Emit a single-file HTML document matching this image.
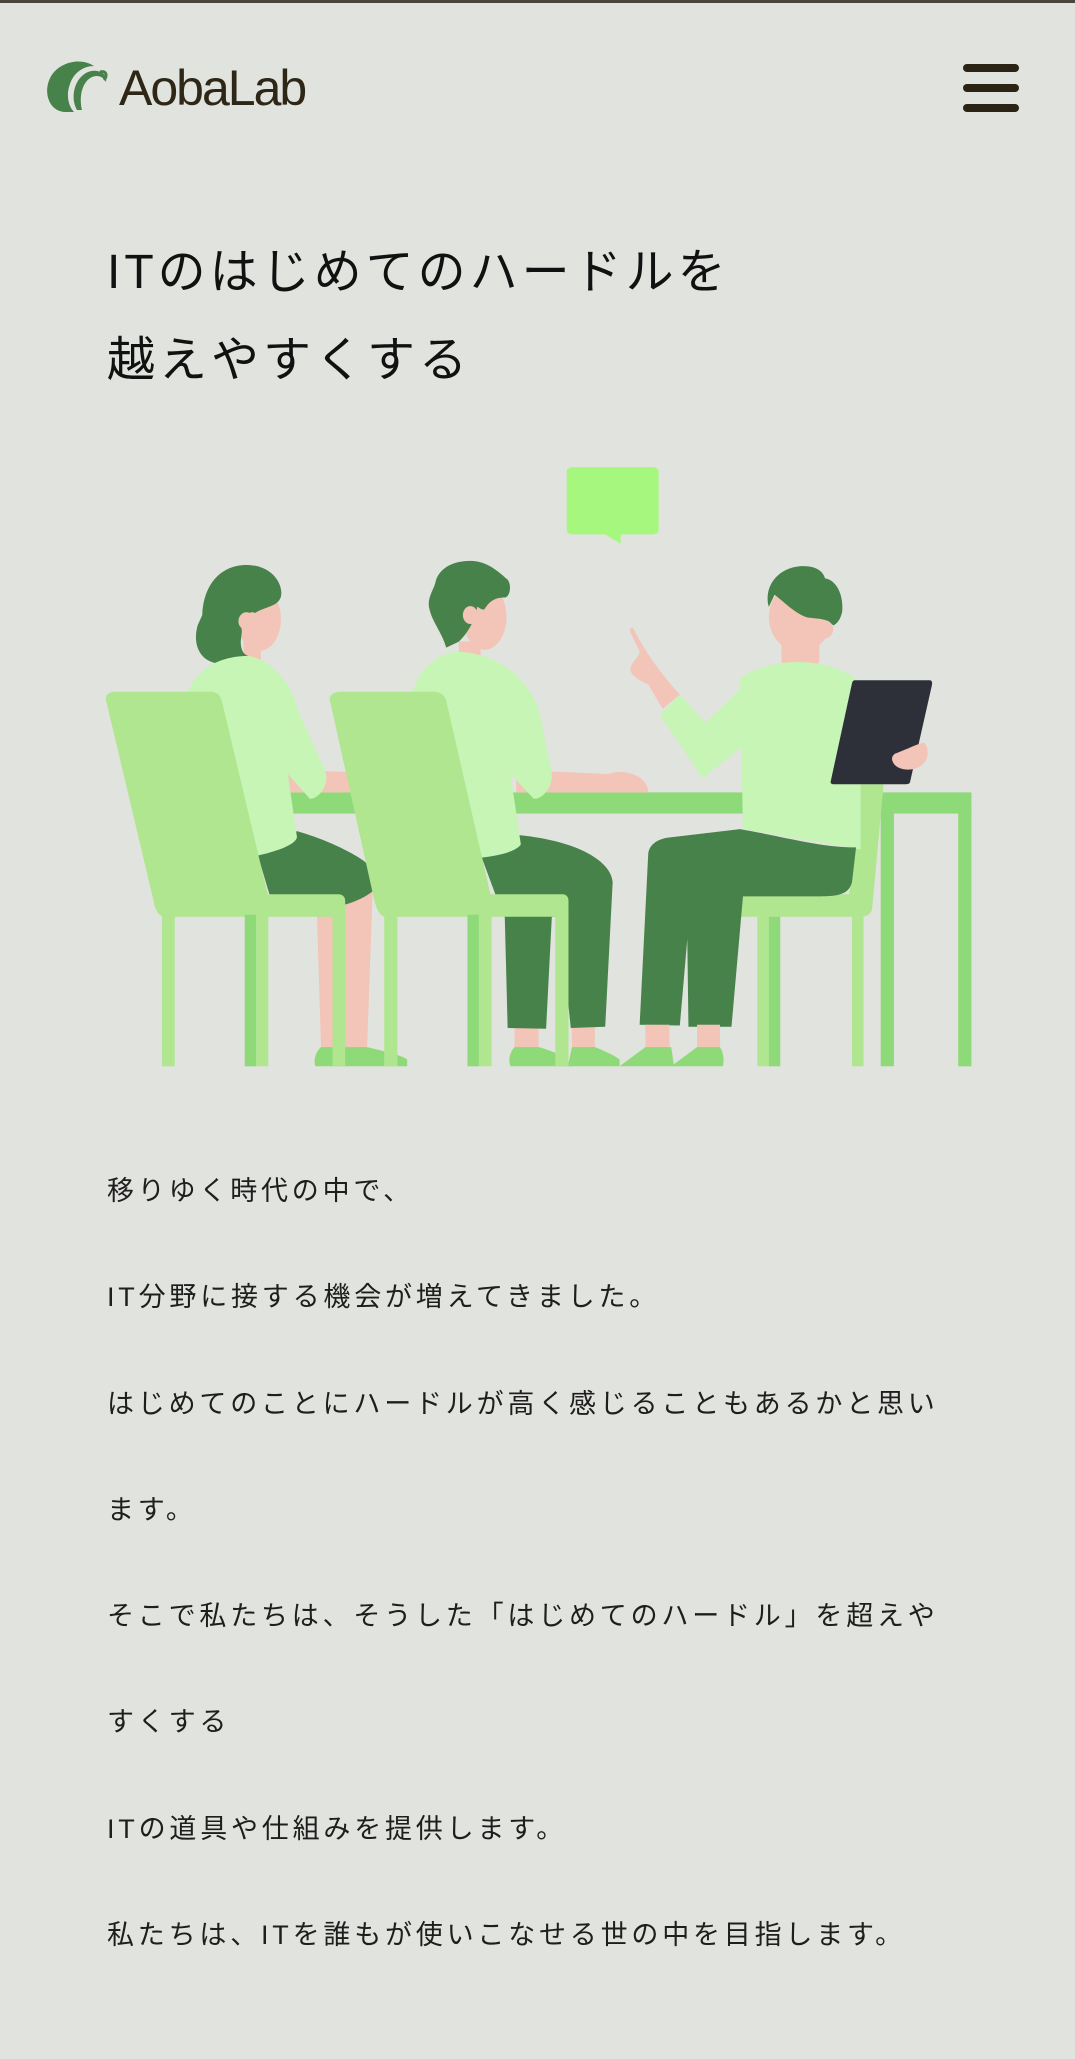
<!DOCTYPE html>
<html><head><meta charset="utf-8"><style>
html,body{margin:0;padding:0}
body{width:1075px;height:2059px;background:#e1e3de;position:relative;overflow:hidden;font-family:"Liberation Sans","Noto Sans CJK JP",sans-serif}
.topline{position:absolute;left:0;top:0;width:1075px;height:3px;background:#4a463e}
.logo{position:absolute;left:119px;top:58px;font-size:50px;letter-spacing:-2px;color:#2e2616;line-height:60px}
.burger span{position:absolute;left:963px;width:56px;height:8px;border-radius:4px;background:#2b2415}
h1{position:absolute;left:107px;top:229px;margin:0;font-weight:400;font-size:48px;letter-spacing:4px;line-height:88px;color:#111}
.body{position:absolute;left:107px;top:1138px;font-size:27px;letter-spacing:3.8px;line-height:106.3px;color:#1e1e1e;white-space:nowrap}
.body p{margin:0}
</style></head><body>
<div class="topline"></div>
<svg style="position:absolute;left:44px;top:60px" width="72" height="54" viewBox="0 0 72 54">
<path d="M20,52 C2,50 -2,26 10,12 C20,1 38,-2 50,6 C40,6 30,12 26,24 C22,34 24,46 30,52 Z" fill="#47824b"/>
<path d="M33,50 C26,38 30,18 44,12 C54,8 64,14 62,22 C58,14 48,14 42,22 C36,30 36,42 38,50 Z" fill="#47824b"/>
<path d="M56,12 C62,10 64,16 60,20" stroke="#47824b" stroke-width="3" fill="none"/>
</svg>
<div class="logo">AobaLab</div>
<div class="burger"><span style="top:64px"></span><span style="top:84px"></span><span style="top:104px"></span></div>
<h1>ITのはじめてのハードルを<br>越えやすくする</h1>

<svg style="position:absolute;left:0;top:0" width="1075" height="1100">
<g transform="translate(80,450) scale(0.574,0.4076)">
<rect x="848" y="42" width="160" height="165" rx="10" fill="#a6f77e"/>
<polygon points="912,205 942,230 942,205" fill="#a6f77e"/>
<rect x="360" y="840" width="1193" height="52" fill="#8fda78"/>
<rect x="1530" y="880" width="23" height="632" fill="#8fda78"/>
<rect x="1395" y="880" width="23" height="632" fill="#8fda78"/>
<path d="M1360,820 L1400,820 L1380,1125 C1378,1140 1370,1145 1360,1145 L1150,1145 L1150,1090 L1340,1090 Z" fill="#afe68f"/>
<rect x="1180" y="1145" width="20" height="367" fill="#afe68f"/>
<rect x="1200" y="1145" width="20" height="367" fill="#8fda78"/>
<rect x="1345" y="1145" width="20" height="367" fill="#afe68f"/>
<rect x="1222" y="460" width="66" height="75" rx="20" fill="#f3c4b8"/>
<ellipse cx="1255" cy="410" rx="55" ry="85" fill="#f3c4b8"/>
<path d="M1200,385 C1190,330 1220,285 1260,285 C1285,285 1295,300 1298,315 C1320,320 1330,360 1328,395 C1325,420 1315,430 1312,430 C1300,410 1280,415 1265,410 C1240,395 1225,370 1210,355 Z" fill="#47824b"/>
<ellipse cx="1298" cy="440" rx="14" ry="22" fill="#f3c4b8"/>
<path d="M1150,560 C1200,510 1300,500 1360,570 L1360,980 L1155,930 Z" fill="#c6f5b6"/>
<path d="M1010,650 L1045,600 L1090,670 L1165,565 L1160,720 L1085,805 Z" fill="#c6f5b6"/>
<path d="M965,440 C975,470 1000,530 1045,600 L1015,635 L990,575 C965,560 955,545 960,530 C965,515 975,505 975,495 L958,445 C958,435 962,432 965,440 Z" fill="#f3c4b8"/>
<path d="M1030,950 L1150,930 C1230,950 1290,975 1352,975 L1345,1060 C1340,1090 1320,1095 1290,1095 L1155,1095 L1135,1415 L1060,1415 L1058,1200 L1045,1412 L975,1410 L990,990 C992,965 1010,952 1030,950 Z" fill="#47824b"/>
<rect x="985" y="1410" width="42" height="60" fill="#f3c4b8"/>
<rect x="1075" y="1410" width="40" height="60" fill="#f3c4b8"/>
<path d="M940,1512 L985,1465 L1030,1465 L1035,1512 Z" fill="#8fda78"/>
<path d="M1030,1512 L1075,1465 L1115,1465 C1122,1480 1122,1500 1120,1512 Z" fill="#8fda78"/>
<path d="M1350,565 L1480,565 C1485,565 1485,572 1484,578 L1446,815 C1445,820 1440,820 1435,820 L1312,820 C1308,820 1307,815 1308,812 L1345,572 C1346,567 1348,565 1350,565 Z" fill="#2d3038"/>
<path d="M1420,745 C1440,735 1460,720 1470,718 C1480,730 1480,760 1465,775 C1450,790 1425,785 1418,770 C1412,758 1415,750 1420,745 Z" fill="#f3c4b8"/>
<path d="M362,785 L470,790 L470,840 L365,840 Z" fill="#f3c4b8"/>
<path d="M412,1100 L510,1075 L500,1470 L420,1470 Z" fill="#f3c4b8"/>
<path d="M410,1512 C405,1490 415,1470 420,1465 L500,1465 C530,1475 560,1485 570,1495 L570,1512 Z" fill="#8fda78"/>
<path d="M310,995 L378,935 C440,960 490,1000 500,1015 L512,1080 C500,1095 480,1108 462,1115 L330,1090 Z" fill="#47824b"/>
<rect x="285" y="470" width="30" height="60" fill="#f3c4b8"/>
<ellipse cx="312" cy="415" rx="38" ry="78" fill="#f3c4b8"/>
<path d="M250,525 C210,525 195,480 205,430 L213,405 C215,330 245,282 290,282 C335,282 355,330 350,360 C345,385 320,385 305,400 C298,395 292,400 290,410 C285,420 280,430 282,445 L280,470 C280,490 285,502 293,505 C280,520 265,525 250,525 Z" fill="#47824b"/>
<ellipse cx="290" cy="420" rx="14" ry="22" fill="#f3c4b8"/>
<path d="M190,590 C210,520 260,505 295,505 C340,520 370,580 380,640 L428,790 C435,830 410,860 400,855 L362,795 L378,950 C375,970 340,985 310,995 L250,990 Z" fill="#c6f5b6"/>
<path d="M45,612 C45,598 52,593 62,593 L228,593 C240,593 245,605 247,615 L327,1090 L450,1090 C458,1090 462,1098 462,1105 L462,1145 L145,1145 C135,1140 130,1125 128,1105 Z" fill="#afe68f"/>
<rect x="143" y="1140" width="22" height="372" fill="#afe68f"/>
<rect x="287" y="1140" width="20" height="372" fill="#8fda78"/>
<rect x="307" y="1140" width="21" height="372" fill="#afe68f"/>
<rect x="440" y="1140" width="22" height="372" fill="#afe68f"/>
<path d="M760,785 L920,795 C950,780 990,800 990,840 L760,840 Z" fill="#f3c4b8"/>
<rect x="757" y="1410" width="42" height="60" fill="#f3c4b8"/>
<rect x="857" y="1410" width="40" height="60" fill="#f3c4b8"/>
<path d="M750,1512 C745,1495 750,1475 757,1465 L800,1465 C830,1478 850,1490 855,1512 Z" fill="#8fda78"/>
<path d="M850,1512 L857,1465 L897,1465 C915,1475 930,1485 940,1495 L940,1512 Z" fill="#8fda78"/>
<path d="M700,1000 L765,945 C870,960 925,1010 928,1060 L915,1415 L855,1418 L835,1145 L740,1145 L745,1418 L812,1420 L822,1145 L738,1145 Z" fill="#47824b"/>
<rect x="660" y="470" width="38" height="60" fill="#f3c4b8"/>
<ellipse cx="705" cy="410" rx="38" ry="80" fill="#f3c4b8"/>
<path d="M638,485 C630,445 612,420 608,385 C605,360 618,340 620,320 C628,285 655,272 680,272 C710,272 730,300 745,318 C752,330 750,360 740,362 C720,362 712,375 705,390 C700,395 695,385 692,385 C688,420 675,450 660,470 Z" fill="#47824b"/>
<ellipse cx="680" cy="405" rx="13" ry="22" fill="#f3c4b8"/>
<path d="M580,590 C600,510 640,495 660,495 C730,500 780,560 800,640 L820,780 C830,830 800,860 790,855 L750,795 L768,968 C760,985 730,995 700,1000 Z" fill="#c6f5b6"/>
<path d="M435,612 C435,598 445,593 455,593 L615,593 C630,593 637,605 638,615 L715,1090 L840,1090 C848,1090 851,1098 851,1105 L851,1145 L530,1145 C520,1140 515,1120 512,1100 Z" fill="#afe68f"/>
<rect x="530" y="1140" width="23" height="372" fill="#afe68f"/>
<rect x="675" y="1140" width="20" height="372" fill="#8fda78"/>
<rect x="695" y="1140" width="22" height="372" fill="#afe68f"/>
<rect x="828" y="1140" width="23" height="372" fill="#afe68f"/>
</g>
</svg>

<div class="body">
<p>移りゆく時代の中で、</p>
<p>IT分野に接する機会が増えてきました。</p>
<p>はじめてのことにハードルが高く感じることもあるかと思い</p>
<p>ます。</p>
<p>そこで私たちは、そうした「はじめてのハードル」を超えや</p>
<p>すくする</p>
<p>ITの道具や仕組みを提供します。</p>
<p>私たちは、ITを誰もが使いこなせる世の中を目指します。</p>
</div>
</body></html>
